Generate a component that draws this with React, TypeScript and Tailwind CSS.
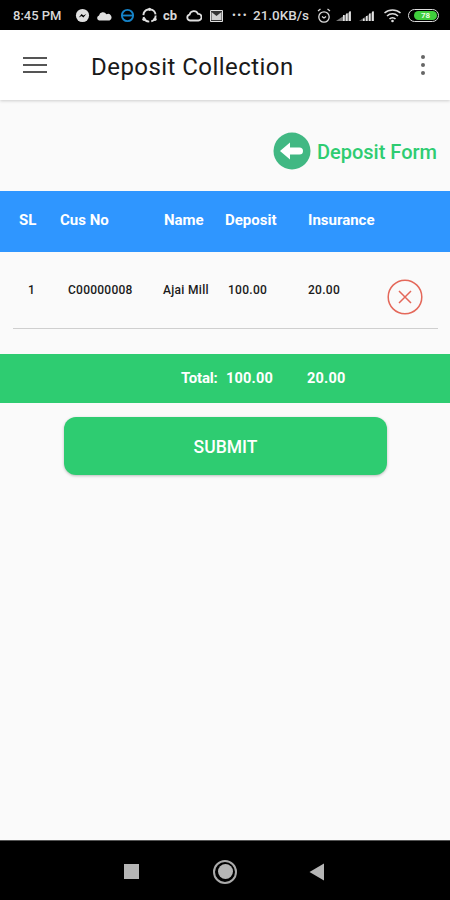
import React from "react";

function StatusBar() {
  return (
    <div className="h-[30px] bg-black flex items-center pl-[13px] pt-[1px] text-[#d8d8d8] font-['Roboto',sans-serif] font-medium shrink-0">
      <span className="text-[13px] w-[62px] whitespace-nowrap">8:45 PM</span>
      <svg width="15" height="15" viewBox="0 0 16 16">
        <circle cx="8" cy="8" r="7" fill="#e0e0e0" />
        <path d="M4 10l3-3.500 2 1.600 3-1.600-3 3.500-2-1.600z" fill="#000" />
      </svg>
      <svg width="16" height="10" viewBox="0 0 16 10" className="ml-[6px]">
        <path d="M3 9.500a2.600 2.600 0 0 1 0-5 4 4 0 0 1 7.400-1.200A3.200 3.200 0 0 1 13.500 9.500z" fill="#e0e0e0" />
      </svg>
      <svg width="15" height="15" viewBox="0 0 16 16" className="ml-[8px]">
        <circle cx="8" cy="8" r="6" fill="none" stroke="#1583c9" strokeWidth="2" />
        <path d="M2 7h12v2H2z" fill="#1583c9" />
      </svg>
      <svg width="17" height="17" viewBox="0 0 18 18" className="ml-[6px]">
        <circle cx="9" cy="9" r="6.500" fill="none" stroke="#e0e0e0" strokeWidth="2" strokeDasharray="8 2.200" />
        <circle cx="9" cy="2.500" r="1.800" fill="#e0e0e0" />
        <circle cx="3.200" cy="13" r="1.800" fill="#e0e0e0" />
        <circle cx="14.800" cy="13" r="1.800" fill="#e0e0e0" />
      </svg>
      <span className="text-[13px] font-bold ml-[5px] w-[17px] leading-none">cb</span>
      <svg width="16" height="13" viewBox="0 0 16 13" className="ml-[6px]">
        <path d="M4 11.500a3 3 0 0 1-.4-5.900 4.400 4.400 0 0 1 8.400-.7 3.300 3.300 0 0 1 .4 6.600z" fill="none" stroke="#e0e0e0" strokeWidth="1.800" />
      </svg>
      <svg width="13" height="12" viewBox="0 0 13 12" className="ml-[8px]">
        <path d="M.5.500h12v11H.5z" fill="#333" stroke="#e0e0e0" />
        <path d="M1.500 2l5 4 5-4v8h-10z" fill="#d0d0d0" />
      </svg>
      <span className="text-[11px] tracking-[1.500px] ml-[9px] w-[21px] leading-none">•••</span>
      <span className="text-[13.500px] w-[58px] whitespace-nowrap">21.0KB/s</span>
      <svg width="16" height="16" viewBox="0 0 16 16" className="ml-[5px]">
        <circle cx="8" cy="9" r="5.200" fill="none" stroke="#ddd" strokeWidth="1.300" />
        <path d="M6 8.500l2 1.500 2-1.500M2 3l2.500-2M14 3l-2.500-2" fill="none" stroke="#ddd" strokeWidth="1.200" />
      </svg>
      <svg width="18" height="12" viewBox="0 0 18 12" className="ml-[3px]">
        <path d="M1 11L16 1v10z" fill="#777" />
        <path d="M8 11h1.600V5H8zM11 11h1.600V3.500H11zM14 11h1.800V1.500H14z" fill="#e4e4e4" />
      </svg>
      <svg width="18" height="12" viewBox="0 0 18 12" className="ml-[5px]">
        <path d="M1 11L16 1v10z" fill="#555" />
        <path d="M5 11h1.600V8.500H5zM8 11h1.600V6H8zM11 11h1.600V3.500H11zM14 11h1.800V1.500H14z" fill="#e4e4e4" />
      </svg>
      <svg width="20" height="15" viewBox="0 0 20 15" className="ml-[7px]">
        <path d="M1.500 5a12 12 0 0 1 16 0M4 8a8 8 0 0 1 11 0M6.500 11a4 4 0 0 1 6 0" fill="none" stroke="#ddd" strokeWidth="1.500" />
        <circle cx="9.500" cy="13" r="1.300" fill="#ddd" />
      </svg>
      <div className="ml-[5px] w-[31px] h-[13px] rounded-full border border-[#ddd] pl-[5px] pr-[1px] py-[1px] flex items-center shrink-0">
        <div className="w-[23px] h-[9px] rounded-full bg-[#3fce3c] flex items-center justify-center text-[8px] font-bold text-[#e8ffe0] leading-none">78</div>
      </div>
    </div>
  );
}

function Header() {
  return (
    <div className="h-[70px] bg-white flex items-center pl-[23px] pr-[25px] shadow-[0_1px_3px_rgba(0,0,0,0.18)] shrink-0 relative">
      <div className="flex flex-col gap-[5px] w-[24px]">
        <div className="h-[2px] bg-[#555]" />
        <div className="h-[2px] bg-[#555]" />
        <div className="h-[2px] bg-[#555]" />
      </div>
      <h1 className="ml-[44px] mt-[4px] text-[24px] font-['Roboto',sans-serif] text-[#1a1a1a] tracking-[0.45px] flex-1">Deposit Collection</h1>
      <div className="flex flex-col gap-[4px]">
        <div className="w-[4px] h-[4px] rounded-full bg-[#666]" />
        <div className="w-[4px] h-[4px] rounded-full bg-[#666]" />
        <div className="w-[4px] h-[4px] rounded-full bg-[#666]" />
      </div>
    </div>
  );
}

function Cell({ w, children, className = "" }: { w: string; children: React.ReactNode; className?: string }) {
  return <div className={`${w} shrink-0 whitespace-nowrap ${className}`}>{children}</div>;
}

export default function App() {
  return (
    <div className="w-[450px] h-[900px] bg-[#fafafa] flex flex-col overflow-hidden font-['Roboto',sans-serif]">
      <StatusBar />
      <Header />

      <div className="h-[91px] flex items-center justify-end pr-[13px] pt-[10px] gap-[6px] shrink-0">
        <svg width="38" height="38" viewBox="0 0 38 38">
          <circle cx="19" cy="19" r="18.500" fill="#41b883" />
          <path d="M7 19l10-8.500v5h9.500a3.500 3.500 0 0 1 0 7H17v5z" fill="#fff" />
        </svg>
        <span className="mt-[3px] text-[20px] font-medium text-[#2ecc71] whitespace-nowrap">Deposit Form</span>
      </div>

      <div className="h-[61px] bg-[#2f96ff] flex items-center pl-[19px] pb-[2px] text-white font-bold text-[15px] shrink-0">
        <Cell w="w-[41px]">SL</Cell>
        <Cell w="w-[104px]">Cus No</Cell>
        <Cell w="w-[61px]">Name</Cell>
        <Cell w="w-[83px]">Deposit</Cell>
        <Cell w="w-[80px]">Insurance</Cell>
      </div>

      <div className="ml-[13px] mr-[12px] h-[77px] border-b border-[#cfcfcf] shrink-0 flex items-start pt-[29px] text-[12px] font-medium text-[#1a1a1a]">
        <Cell w="w-[55px]" className="pl-[15px]">1</Cell>
        <Cell w="w-[95px] tracking-[0.25px]">C00000008</Cell>
        <Cell w="w-[65px] tracking-[0.3px]">Ajai Mill</Cell>
        <Cell w="w-[80px] tracking-[0.3px]">100.00</Cell>
        <Cell w="w-[80px] tracking-[0.3px]">20.00</Cell>
        <svg width="36" height="36" viewBox="0 0 36 36" className="-mt-[2px] -ml-[1px] shrink-0">
          <circle cx="18" cy="18" r="16.800" fill="none" stroke="#e4685a" strokeWidth="1.500" />
          <path d="M12 12l12 12M24 12L12 24" stroke="#e4685a" strokeWidth="1.500" />
        </svg>
      </div>

      <div className="h-[49px] mt-[25px] bg-[#2ecc71] flex items-center pl-[181px] text-white font-bold text-[14.500px] shrink-0">
        <span className="w-[45px] text-[15px] tracking-[-0.2px]">Total:</span>
        <span className="w-[81px] tracking-[0.2px]">100.00</span>
        <span className="tracking-[0.2px]">20.00</span>
      </div>

      <button className="mt-[14px] ml-[64px] w-[323px] h-[58px] pt-[2px] rounded-[12px] bg-[#2ecc71] text-white font-medium text-[17.500px] shadow-[0_1px_3px_rgba(0,0,0,0.25)] shrink-0">
        SUBMIT
      </button>

      <div className="flex-1" />

      <div className="h-[60px] bg-black border-t border-[#555] shrink-0 flex items-center pl-[124px] pt-[2px]">
        <div className="w-[15px] h-[15px] bg-[#b5b5b5]" />
        <div className="ml-[74px] w-[24px] h-[24px] rounded-full border-2 border-[#aaa] flex items-center justify-center">
          <div className="w-[15px] h-[15px] rounded-full bg-[#b5b5b5]" />
        </div>
        <svg width="16" height="18" viewBox="0 0 16 18" className="ml-[72px]">
          <path d="M15 0.500v17L0.500 9z" fill="#b5b5b5" />
        </svg>
      </div>
    </div>
  );
}
